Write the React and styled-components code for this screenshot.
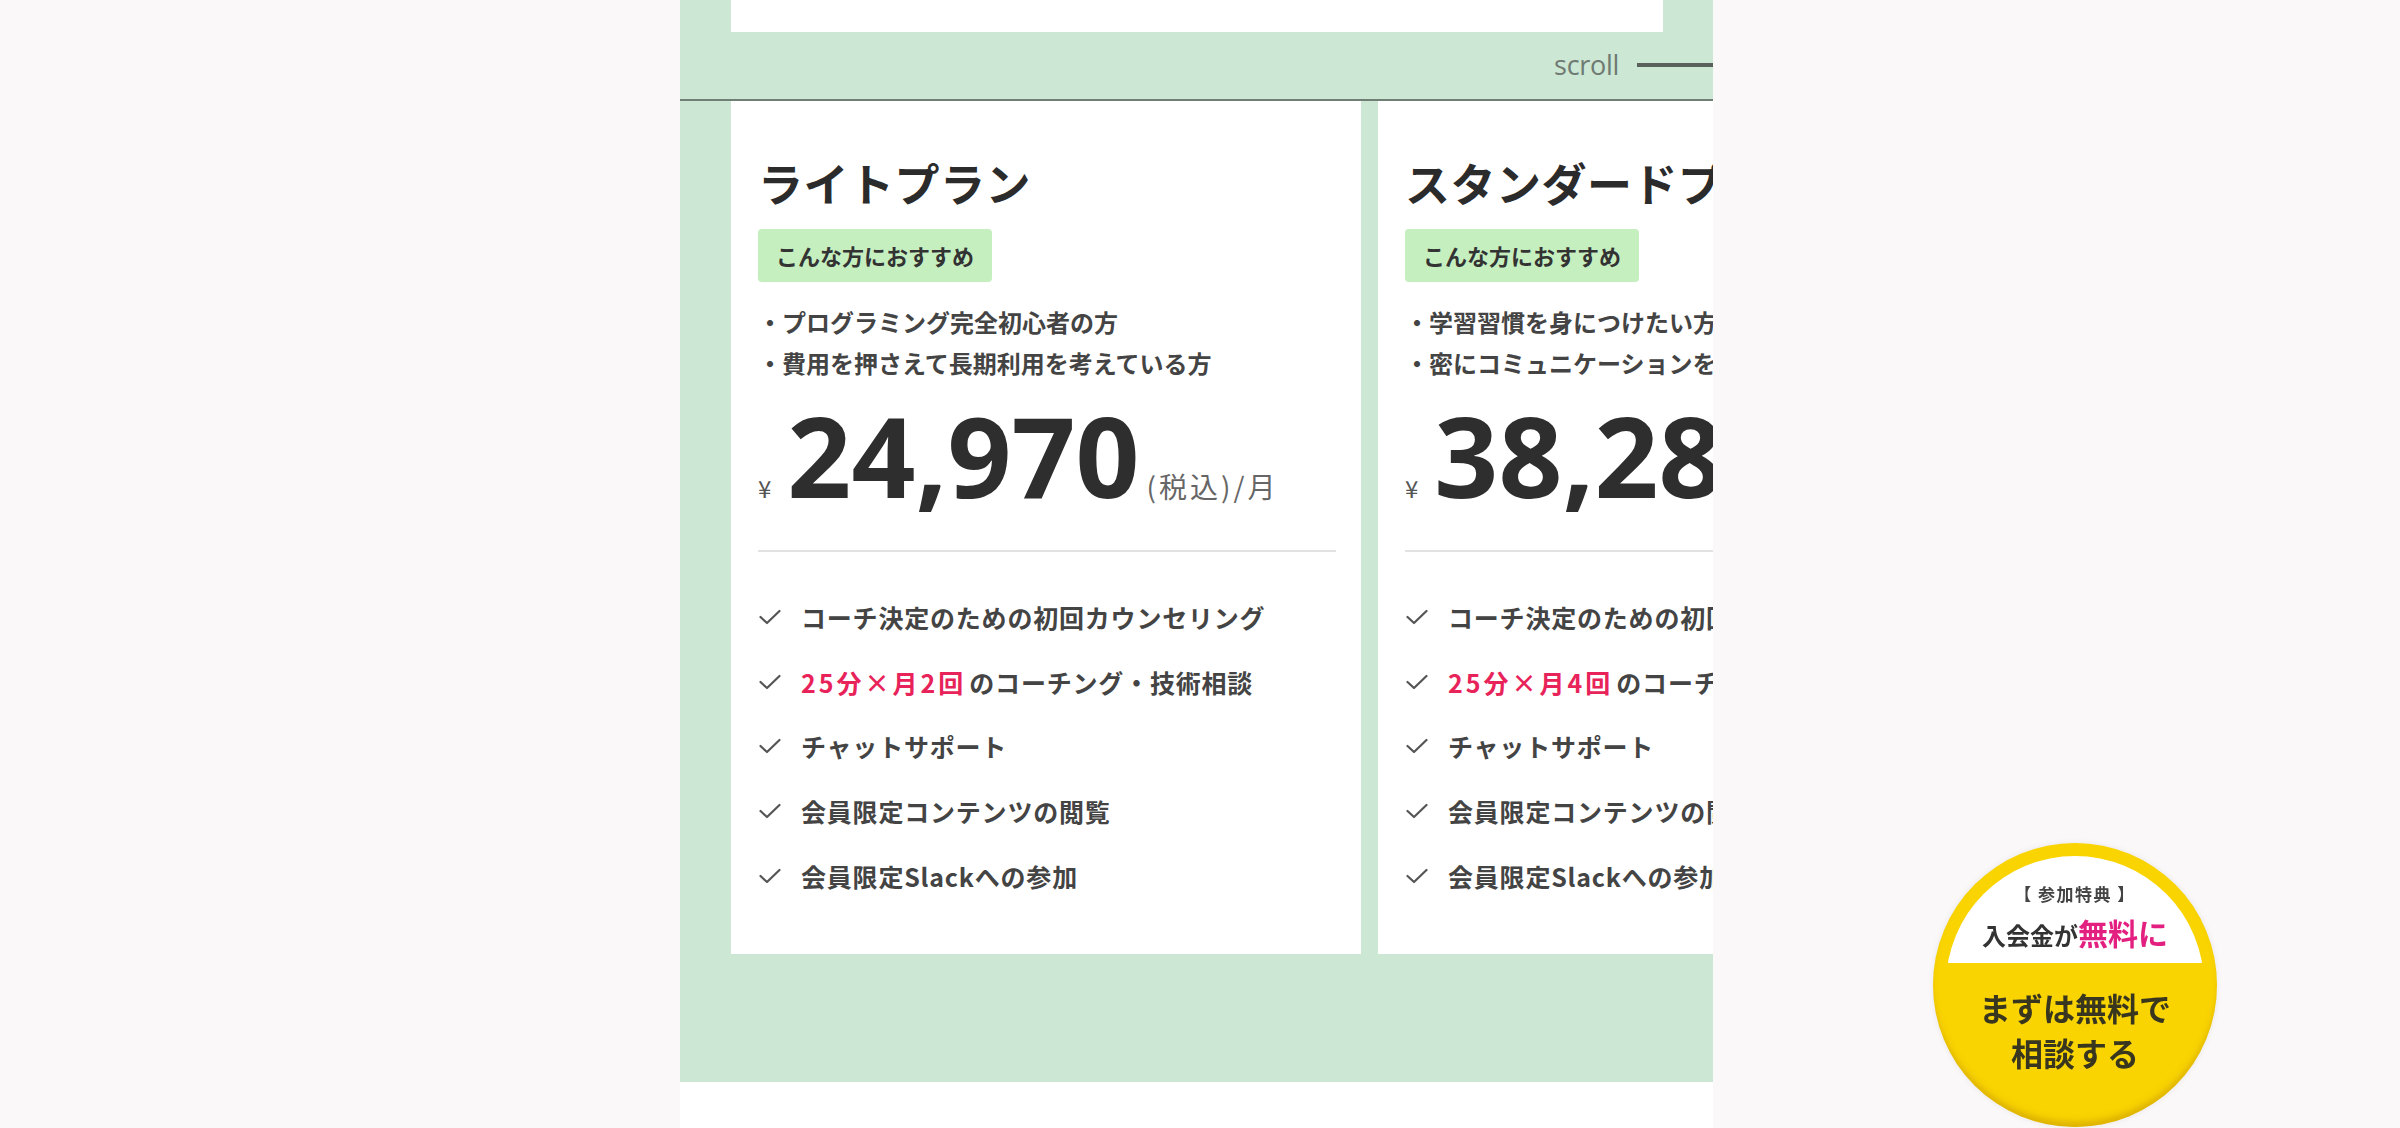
import React from "react";
import styled, { createGlobalStyle } from "styled-components";

const GlobalStyle = createGlobalStyle`
  html, body {
    margin: 0;
    padding: 0;
    background: #faf8f9;
  }
  body {
    font-family: "Noto Sans CJK JP", "Noto Sans", sans-serif;
    color: #333;
  }
  * { box-sizing: border-box; }
`;

const Page = styled.div`
  min-height: 1128px;
  background: #faf8f9;
  overflow: hidden;
`;

const Column = styled.main`
  width: 1033px;
  margin-left: calc(50% - 520px);
  background: #ffffff;
  min-height: 1128px;
`;

const PlansSection = styled.section`
  background: #cce7d3;
  padding-bottom: 128px;
`;

const IntroCard = styled.div`
  height: 32px;
  margin: 0 50px 0 51px;
  background: #ffffff;
`;

const ScrollHint = styled.div`
  height: 67px;
  display: flex;
  align-items: center;
  justify-content: flex-end;
  gap: 18px;
  padding-bottom: 2px;
`;

const ScrollLabel = styled.span`
  font-family: "Open Sans", "Noto Sans", sans-serif;
  font-size: 27px;
  color: #6e7a72;
  letter-spacing: -0.3px;
  line-height: 1;
`;

const ScrollLine = styled.span`
  width: 76px;
  height: 4px;
  background: #58615b;
`;

const Rule = styled.div`
  height: 2px;
  background: #6f7f74;
`;

const Slider = styled.div`
  display: flex;
  gap: 17px;
  padding-left: 51px;
  overflow: hidden;
`;

const PlanCard = styled.article`
  flex: 0 0 630px;
  background: #ffffff;
  padding: 50px 25px 58px 27px;
`;

const PlanTitle = styled.h3`
  margin: 0;
  font-size: 45px;
  line-height: 63px;
  font-weight: 700;
  color: #2b2b2b;
  white-space: nowrap;
  letter-spacing: 0.5px;
`;

const Badge = styled.div`
  display: inline-block;
  margin-top: 15px;
  padding: 10px 18px;
  background: #c6efc0;
  border-radius: 4px;
  font-size: 22px;
  line-height: 33px;
  font-weight: 700;
  color: #333;
`;

const TargetList = styled.ul`
  list-style: none;
  margin: 19px 0 0;
  padding: 0;
`;

const TargetItem = styled.li`
  font-size: 24px;
  line-height: 41px;
  font-weight: 700;
  color: #444;
  white-space: nowrap;
`;

const PriceRow = styled.div`
  display: flex;
  align-items: baseline;
  margin-top: 17px;
  height: 110px;
  white-space: nowrap;
`;

const Yen = styled.span`
  font-size: 24px;
  color: #555;
  margin-right: 16px;
`;

const Amount = styled.span`
  font-family: "Noto Sans", "Open Sans", sans-serif;
  font-size: 112px;
  line-height: 0.99;
  font-weight: 700;
  color: #2e2e2e;
`;

const Unit = styled.span`
  margin-left: 7px;
  font-size: 28px;
  letter-spacing: 3px;
  color: #666;
`;

const Divider = styled.hr`
  margin: 40px 0 0;
  border: 0;
  height: 2px;
  background: #e2e2e2;
`;

const FeatureList = styled.ul`
  list-style: none;
  margin: 45px 0 0;
  padding: 0;
  display: flex;
  flex-direction: column;
  gap: 24.7px;
`;

const FeatureItem = styled.li`
  display: flex;
  align-items: center;
  gap: 20px;
  height: 40px;
  font-size: 25px;
  letter-spacing: 0.8px;
  font-weight: 700;
  color: #444;
  white-space: nowrap;
`;

const Accent = styled.span`
  color: #e8235a;
  letter-spacing: 3px;
  margin-right: 3px;
`;

const CheckIcon = () => (
  <svg width="22" height="16" viewBox="0 0 22 16" fill="none" style={{ flex: "0 0 22px", marginLeft: 1 }}>
    <path d="M1.5 8 L8 14 L20.5 2" stroke="#555" strokeWidth="2.2" strokeLinecap="round" strokeLinejoin="round" />
  </svg>
);

const FloatingCta = styled.a`
  position: fixed;
  right: 183px;
  bottom: 1px;
  width: 284px;
  height: 284px;
  border-radius: 50%;
  background: #f9d400;
  padding: 13px;
  text-decoration: none;
  box-shadow: inset 0 -7px 6px -2px rgba(196, 150, 0, 0.55), 0 0 6px rgba(0, 0, 0, 0.08);
  display: block;
`;

const CtaInner = styled.div`
  width: 258px;
  height: 258px;
  border-radius: 50%;
  overflow: hidden;
  display: flex;
  flex-direction: column;
`;

const CtaTop = styled.div`
  height: 107px;
  flex: 0 0 107px;
  background: #ffffff;
  display: flex;
  flex-direction: column;
  align-items: center;
  justify-content: flex-end;
  gap: 8px;
  padding-bottom: 10px;
`;

const CtaPerk = styled.div`
  font-size: 17px;
  line-height: 24px;
  letter-spacing: 1.5px;
  font-weight: 700;
  color: #444;
`;

const CtaFree = styled.div`
  font-size: 24px;
  line-height: 36px;
  font-weight: 700;
  color: #333;
  white-space: nowrap;
`;

const CtaPink = styled.span`
  font-size: 30px;
  color: #e31f80;
`;

const CtaBottom = styled.div`
  padding-top: 22px;
  text-align: center;
  font-size: 32px;
  line-height: 45px;
  font-weight: 700;
  color: #38361f;
`;

const plans = [
  {
    name: "ライトプラン",
    targets: ["・プログラミング完全初心者の方", "・費用を押さえて長期利用を考えている方"],
    price: "24,970",
    count: "2",
  },
  {
    name: "スタンダードプラン",
    targets: ["・学習習慣を身につけたい方", "・密にコミュニケーションを取りたい方"],
    price: "38,280",
    count: "4",
  },
];

export default function App() {
  return (
    <>
      <GlobalStyle />
      <Page>
        <Column>
          <PlansSection>
            <IntroCard />
            <ScrollHint>
              <ScrollLabel>scroll</ScrollLabel>
              <ScrollLine />
            </ScrollHint>
            <Rule />
            <Slider>
              {plans.map((p) => (
                <PlanCard key={p.name}>
                  <PlanTitle>{p.name}</PlanTitle>
                  <Badge>こんな方におすすめ</Badge>
                  <TargetList>
                    {p.targets.map((t) => (
                      <TargetItem key={t}>{t}</TargetItem>
                    ))}
                  </TargetList>
                  <PriceRow>
                    <Yen>¥</Yen>
                    <Amount>{p.price}</Amount>
                    <Unit>(税込)/月</Unit>
                  </PriceRow>
                  <Divider />
                  <FeatureList>
                    <FeatureItem>
                      <CheckIcon />
                      <span>コーチ決定のための初回カウンセリング</span>
                    </FeatureItem>
                    <FeatureItem>
                      <CheckIcon />
                      <span>
                        <Accent>25分×月{p.count}回</Accent>のコーチング・技術相談
                      </span>
                    </FeatureItem>
                    <FeatureItem>
                      <CheckIcon />
                      <span>チャットサポート</span>
                    </FeatureItem>
                    <FeatureItem>
                      <CheckIcon />
                      <span>会員限定コンテンツの閲覧</span>
                    </FeatureItem>
                    <FeatureItem>
                      <CheckIcon />
                      <span>会員限定Slackへの参加</span>
                    </FeatureItem>
                  </FeatureList>
                </PlanCard>
              ))}
            </Slider>
          </PlansSection>
        </Column>
        <FloatingCta href="#">
          <CtaInner>
            <CtaTop>
              <CtaPerk>【 参加特典 】</CtaPerk>
              <CtaFree>
                入会金が<CtaPink>無料に</CtaPink>
              </CtaFree>
            </CtaTop>
            <CtaBottom>
              まずは無料で
              <br />
              相談する
            </CtaBottom>
          </CtaInner>
        </FloatingCta>
      </Page>
    </>
  );
}
